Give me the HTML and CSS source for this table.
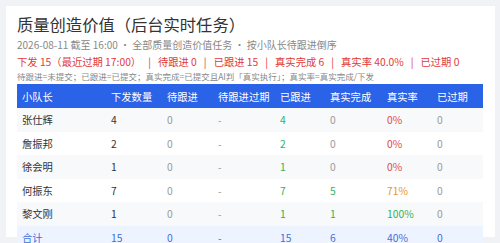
FILE: index.html
```html
<!DOCTYPE html>
<html lang="zh">
<head>
<meta charset="utf-8">
<link rel="stylesheet" href="styles.css">
</head>
<body>
<div class="card">
  <h1 class="title">质量创造价值（后台实时任务）</h1>
  <div class="sub">2026-08-11 截至 16:00 · 全部质量创造价值任务 · 按小队长待跟进倒序</div>
  <div class="stats">下发 15（最近过期 17:00）<span class="sep">|</span>待跟进 0<span class="sep">|</span>已跟进 15<span class="sep">|</span>真实完成 6<span class="sep">|</span>真实率 40.0%<span class="sep">|</span>已过期 0</div>
  <div class="note">待跟进=未提交；已跟进=已提交；真实完成=已提交且AI判「真实执行」；真实率=真实完成/下发</div>
  <table class="tbl">
    <colgroup>
      <col class="c1"><col class="c2"><col class="c3"><col class="c4"><col class="c5"><col class="c6"><col class="c7"><col class="c8">
    </colgroup>
    <thead>
      <tr><th>小队长</th><th>下发数量</th><th>待跟进</th><th>待跟进过期</th><th>已跟进</th><th>真实完成</th><th>真实率</th><th>已过期</th></tr>
    </thead>
    <tbody>
      <tr><td class="name">张仕辉</td><td class="dark">4</td><td class="mute">0</td><td class="mute">-</td><td class="green">4</td><td class="mute">0</td><td class="red">0%</td><td class="mute">0</td></tr>
      <tr><td class="name">詹振邦</td><td class="dark">2</td><td class="mute">0</td><td class="mute">-</td><td class="green">2</td><td class="mute">0</td><td class="red">0%</td><td class="mute">0</td></tr>
      <tr><td class="name">徐会明</td><td class="dark">1</td><td class="mute">0</td><td class="mute">-</td><td class="green">1</td><td class="mute">0</td><td class="red">0%</td><td class="mute">0</td></tr>
      <tr><td class="name">何振东</td><td class="dark">7</td><td class="mute">0</td><td class="mute">-</td><td class="green">7</td><td class="green">5</td><td class="orange">71%</td><td class="mute">0</td></tr>
      <tr><td class="name">黎文刚</td><td class="dark">1</td><td class="mute">0</td><td class="mute">-</td><td class="green">1</td><td class="green">1</td><td class="green">100%</td><td class="mute">0</td></tr>
      <tr class="total"><td>合计</td><td>15</td><td>0</td><td>-</td><td>15</td><td>6</td><td>40%</td><td>0</td></tr>
    </tbody>
  </table>
</div>
</body>
</html>
```
FILE: styles.css
```css
html, body {
  margin: 0;
  height: 100%;
}
body {
  background: #f0f2f5;
  padding: 6px 5px 6px 6px;
  box-sizing: border-box;
  font-family: "Noto Sans CJK SC", "Noto Sans", sans-serif;
  color: #333;
}
.card {
  background: #fff;
  height: 100%;
  box-sizing: border-box;
  padding: 6px 12px 0 11px;
}
.title {
  margin: 0;
  font-size: 16.3px;
  line-height: 24px;
  font-weight: 400;
  color: #333;
}
.sub {
  margin-top: 1px;
  font-size: 10px;
  line-height: 16px;
  color: #888;
  white-space: nowrap;
}
.stats {
  margin-top: 1px;
  font-size: 10.3px;
  line-height: 16px;
  color: #e03a3a;
  white-space: nowrap;
}
.sep {
  margin: 0 7px;
}
.note {
  font-size: 8.5px;
  line-height: 13px;
  color: #888;
  white-space: nowrap;
}
.tbl {
  margin-top: 1px;
  width: 100%;
  border-collapse: collapse;
  table-layout: fixed;
  font-size: 10.3px;
}
.c1 { width: 89px; }
.c2 { width: 56px; }
.c3 { width: 51px; }
.c4 { width: 62px; }
.c5 { width: 50px; }
.c6 { width: 57px; }
.c7 { width: 50px; }
.c8 { width: 51px; }
.tbl th {
  background: #2a62e8;
  color: #fff;
  font-weight: 400;
  text-align: left;
  height: 24px;
  padding: 0 0 0 5px;
  white-space: nowrap;
}
.tbl td {
  height: 23.5px;
  padding: 0 0 0 5px;
  text-align: left;
  white-space: nowrap;
}
.tbl tbody tr:nth-child(odd) td { background: #f8f9fb; }
.tbl tbody tr:nth-child(even) td { background: #fff; }
.tbl tbody tr.total td { background: #eef4ff; color: #3b6fe0; }
.name { color: #333; }
.dark { color: #333; }
.mute { color: #999; }
.green { color: #2fb35a; }
.red { color: #e04848; }
.orange { color: #f0932b; }
```
